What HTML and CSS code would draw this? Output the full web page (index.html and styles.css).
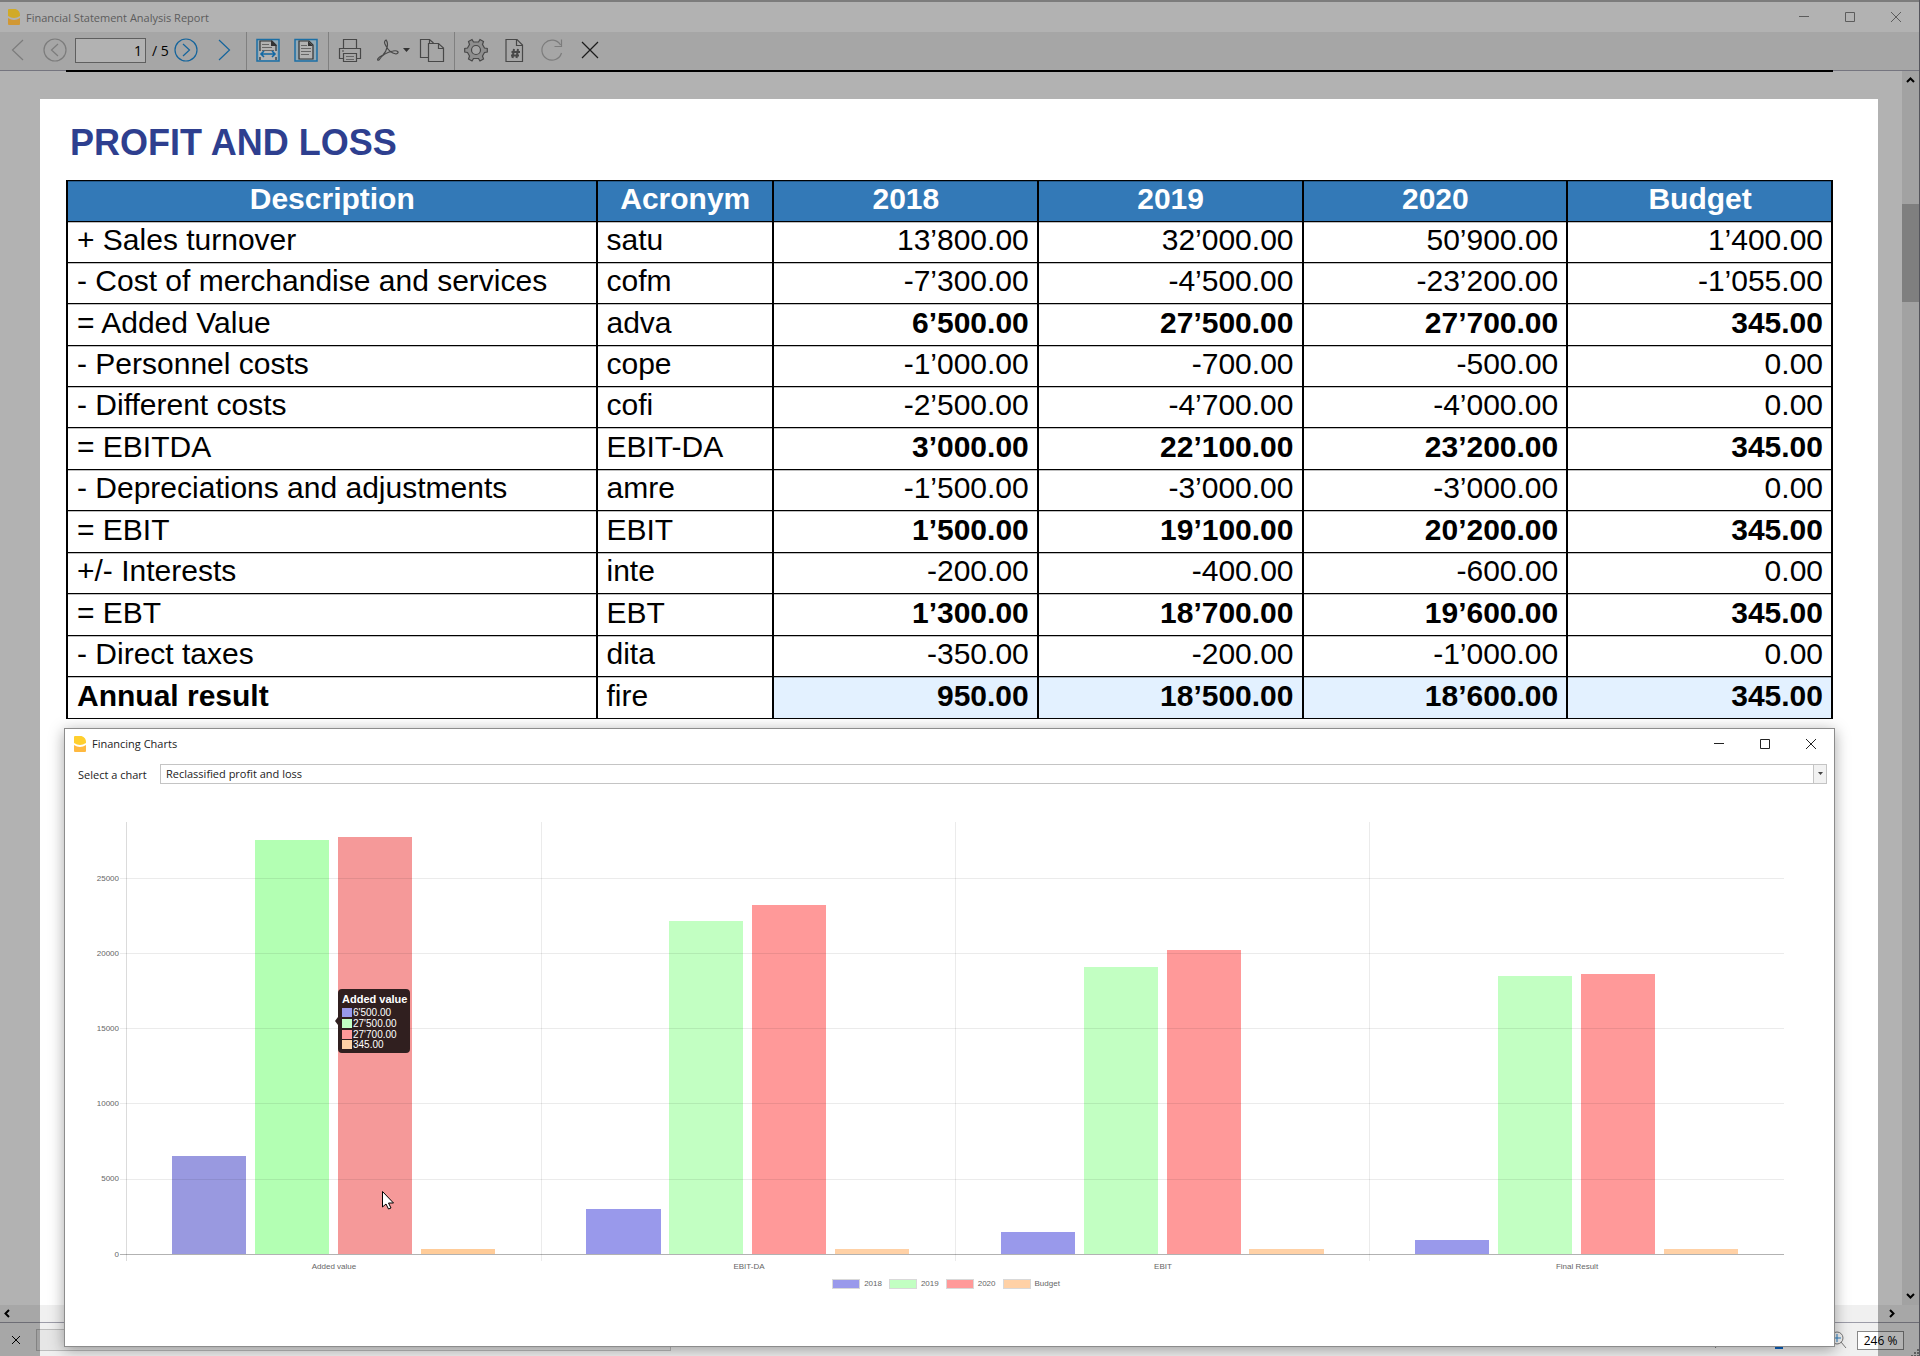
FILE: index.html
```html
<!DOCTYPE html>
<html lang="en">
<head>
<meta charset="utf-8">
<title>Financial Statement Analysis Report</title>
<link rel="stylesheet" href="styles.css">
</head>
<body>
<svg class="defs" width="0" height="0" aria-hidden="true">
  <defs>
    <symbol id="brand" viewBox="0 0 12 16">
      <path class="brand-top" d="M1 0H7.500Q12 1.500 12 6V7Q6 11 0 7V1Q0 0 1 0Z"/>
      <path class="brand-bottom" d="M0 9Q6 13 12 9V15Q12 16 11 16H1Q0 16 0 15Z"/>
    </symbol>
    <symbol id="minimize" viewBox="0 0 12 12"><path d="M1 5.500H11"/></symbol>
    <symbol id="maximize" viewBox="0 0 12 12"><path d="M1.500 1.500H10.500V10.500H1.500Z"/></symbol>
    <symbol id="close" viewBox="0 0 12 12"><path d="M1 1L11 11M11 1L1 11"/></symbol>
  </defs>
</svg>
<div class="app">
  <header class="titlebar">
    <svg class="brand brand-dim" width="12" height="16"><use href="#brand"/></svg>
    <span class="window-title">Financial Statement Analysis Report</span>
    <div class="window-controls">
      <button aria-label="Minimize"><svg width="12" height="12"><use href="#minimize"/></svg></button>
      <button aria-label="Maximize"><svg width="12" height="12"><use href="#maximize"/></svg></button>
      <button aria-label="Close"><svg width="12" height="12"><use href="#close"/></svg></button>
    </div>
  </header>

  <nav class="toolbar" aria-label="Report tools">
    <div class="tool-group pager">
      <button aria-label="First page" class="muted"><svg viewBox="0 0 24 24"><path d="M18 2L7.500 12L18 22"/></svg></button>
      <button aria-label="Previous page" class="muted"><svg viewBox="0 0 24 24"><circle cx="12" cy="12" r="11"/><path d="M15 6L8.500 12L15 18"/></svg></button>
      <label class="page-number"><input type="text" value="1" aria-label="Page"><span>/ 5</span></label>
      <button aria-label="Next page" class="blue"><svg viewBox="0 0 24 24"><circle cx="12" cy="12" r="11"/><path d="M9 6L15.500 12L9 18"/></svg></button>
      <button aria-label="Last page" class="blue"><svg viewBox="0 0 24 24"><path d="M7 2L17.500 12L7 22"/></svg></button>
    </div>
    <div class="tool-group">
      <button aria-label="Fit width"><svg viewBox="0 0 24 24"><path class="tile" d="M1 1.500H23V23H1Z"/><path class="paper" d="M4 22V3H16L20 7V22"/><path class="solid" d="M15 2V8H21Z"/><path class="thin" d="M6 6.500H13M6 9.500H16M6 12.500H18"/><path class="paper-fill" d="M3 13H21V19H3Z"/><path class="arrow" d="M5 16H19M8 13L5 16L8 19M16 13L19 16L16 19"/></svg></button>
      <button aria-label="Fit page"><svg viewBox="0 0 24 24"><path class="tile" d="M1 1.500H23V23H1Z"/><path class="paper" d="M5 3H15L19 7V21H5Z"/><path class="solid" d="M14 3V8H19Z"/><path class="thin" d="M7 7.500H13M7 10.500H17M7 13.500H17M7 16.500H15"/></svg></button>
    </div>
    <div class="tool-group">
      <button aria-label="Print"><svg viewBox="0 0 24 24"><path d="M5.500 10.500V1.500H18.500V10.500M5.500 20.500H1.500V10.500H22.500V20.500H18.500M5.500 15.500H18.500V23.500H5.500Z"/><path class="thin" d="M8 18.500H16M8 21.500H16"/><path d="M4 13H6"/></svg></button>
      <button aria-label="Export to PDF" class="pdf"><svg viewBox="0 0 34 24"><path d="M10 2C8 3 8 5 10 8C12 12 15 15 20 16C24 15 22 12 17 13C11 14 6 17 3 22C0 23 2 19 7 17C11 13 13 5 10 2Z"/><path class="solid" d="M27 10H34L30.500 14Z"/></svg></button>
      <button aria-label="Copy"><svg viewBox="0 0 24 24"><path d="M8.500 19.500H.500V1.500H9.500L13.500 5"/><path d="M9.500 1.500V5.500"/><path class="paper-fill line" d="M8.500 5.500H18.500L23.500 10V23.500H8.500Z"/><path d="M18.500 5.500V10.500H23"/></svg></button>
    </div>
    <div class="tool-group last">
      <button aria-label="Settings"><svg viewBox="0 0 24 24"><path class="gear" d="M9.500 4L8 1.500L4.500 3.500L5.500 6.500L3.500 10L.700 10.500V14L3.500 14.500L5.500 18L4.500 21L8 23L9.500 20.500H14.500L16 23L19.500 21L18.500 18L20.500 14.500L23.300 14V10.500L20.500 10L18.500 6.500L19.500 3.500L16 1.500L14.500 4Z"/><circle class="gear-hole" cx="12" cy="12" r="4.500"/></svg></button>
      <button aria-label="Page setup"><svg viewBox="0 0 24 24"><path d="M4 1.500H15L20.500 7V23.500H4Z"/><path d="M14.500 1.500V7.500H20"/><path class="hash" d="M12 11L10.500 20M16 11L14.500 20M9.500 14H18M9 17.500H17"/></svg></button>
      <button aria-label="Refresh" class="muted"><svg viewBox="0 0 24 24"><path d="M21.500 15A10 10 0 1 1 20.500 7M21.500 1.500V8.500H14.500"/></svg></button>
      <button aria-label="Close preview" class="dark"><svg viewBox="0 0 24 24"><path d="M4 4L20 20M20 4L4 20"/></svg></button>
    </div>
  </nav>

  <main class="viewport">
    <div class="pages">
      <div class="previous-page"></div>
      <section class="page">
        <h1>PROFIT AND LOSS</h1>
        <table class="statement">
          <colgroup><col class="c-desc"><col class="c-acr"><col class="c-num"><col class="c-num"><col class="c-num"><col class="c-num"></colgroup>
          <thead><tr><th>Description</th><th>Acronym</th><th>2018</th><th>2019</th><th>2020</th><th>Budget</th></tr></thead>
          <tbody>
            <tr><td>+ Sales turnover</td><td>satu</td><td>13’800.00</td><td>32’000.00</td><td>50’900.00</td><td>1’400.00</td></tr>
            <tr><td>- Cost of merchandise and services</td><td>cofm</td><td>-7’300.00</td><td>-4’500.00</td><td>-23’200.00</td><td>-1’055.00</td></tr>
            <tr class="sum"><td>= Added Value</td><td>adva</td><td>6’500.00</td><td>27’500.00</td><td>27’700.00</td><td>345.00</td></tr>
            <tr><td>- Personnel costs</td><td>cope</td><td>-1’000.00</td><td>-700.00</td><td>-500.00</td><td>0.00</td></tr>
            <tr><td>- Different costs</td><td>cofi</td><td>-2’500.00</td><td>-4’700.00</td><td>-4’000.00</td><td>0.00</td></tr>
            <tr class="sum"><td>= EBITDA</td><td>EBIT-DA</td><td>3’000.00</td><td>22’100.00</td><td>23’200.00</td><td>345.00</td></tr>
            <tr><td>- Depreciations and adjustments</td><td>amre</td><td>-1’500.00</td><td>-3’000.00</td><td>-3’000.00</td><td>0.00</td></tr>
            <tr class="sum"><td>= EBIT</td><td>EBIT</td><td>1’500.00</td><td>19’100.00</td><td>20’200.00</td><td>345.00</td></tr>
            <tr><td>+/- Interests</td><td>inte</td><td>-200.00</td><td>-400.00</td><td>-600.00</td><td>0.00</td></tr>
            <tr class="sum"><td>= EBT</td><td>EBT</td><td>1’300.00</td><td>18’700.00</td><td>19’600.00</td><td>345.00</td></tr>
            <tr><td>- Direct taxes</td><td>dita</td><td>-350.00</td><td>-200.00</td><td>-1’000.00</td><td>0.00</td></tr>
            <tr class="sum result"><td>Annual result</td><td>fire</td><td>950.00</td><td>18’500.00</td><td>18’600.00</td><td>345.00</td></tr>
          </tbody>
        </table>

        <section class="chart-window" aria-label="Financing Charts">
          <header class="chart-titlebar">
            <svg class="brand" width="12" height="16"><use href="#brand"/></svg>
            <span class="window-title">Financing Charts</span>
            <div class="window-controls">
              <button aria-label="Minimize"><svg width="12" height="12"><use href="#minimize"/></svg></button>
              <button aria-label="Maximize"><svg width="12" height="12"><use href="#maximize"/></svg></button>
              <button aria-label="Close"><svg width="12" height="12"><use href="#close"/></svg></button>
            </div>
          </header>
          <div class="chooser">
            <label for="chart-select">Select a chart</label>
            <div class="select-box">
              <select id="chart-select"><option>Reclassified profit and loss</option></select>
              <span class="select-arrow"><svg width="5" height="4" viewBox="0 0 5 4"><path d="M0 0H5L2.500 3Z"/></svg></span>
            </div>
          </div>
          <svg class="chart" viewBox="0 0 1769 475" role="img" aria-label="Reclassified profit and loss">
            <g class="active">
              <rect class="y18" x="107" y="356" width="74" height="98"/>
              <rect class="y19" x="190" y="40" width="74" height="414"/>
              <rect class="y20" x="273" y="37" width="74" height="417"/>
              <rect class="bud" x="356" y="449" width="74" height="5"/>
            </g>
            <g>
              <rect class="y18" x="521" y="409" width="75" height="45"/>
              <rect class="y19" x="604" y="121" width="74" height="333"/>
              <rect class="y20" x="687" y="105" width="74" height="349"/>
              <rect class="bud" x="770" y="449" width="74" height="5"/>
              <rect class="y18" x="936" y="432" width="74" height="22"/>
              <rect class="y19" x="1019" y="167" width="74" height="287"/>
              <rect class="y20" x="1102" y="150" width="74" height="304"/>
              <rect class="bud" x="1184" y="449" width="75" height="5"/>
              <rect class="y18" x="1350" y="440" width="74" height="14"/>
              <rect class="y19" x="1433" y="176" width="74" height="278"/>
              <rect class="y20" x="1516" y="174" width="74" height="280"/>
              <rect class="bud" x="1599" y="449" width="74" height="5"/>
            </g>
            <g class="grid">
              <rect x="55" y="78" width="1664" height="1"/>
              <rect x="55" y="153" width="1664" height="1"/>
              <rect x="55" y="228" width="1664" height="1"/>
              <rect x="55" y="303" width="1664" height="1"/>
              <rect x="55" y="379" width="1664" height="1"/>
              <rect x="476" y="22" width="1" height="439"/>
              <rect x="890" y="22" width="1" height="439"/>
              <rect x="1304" y="22" width="1" height="439"/>
              <rect class="y-axis" x="61" y="22" width="1" height="439"/>
              <rect class="x-axis" x="55" y="454" width="1664" height="1"/>
            </g>
            <g class="ticks">
              <text x="54" y="81">25000</text>
              <text x="54" y="156">20000</text>
              <text x="54" y="231">15000</text>
              <text x="54" y="306">10000</text>
              <text x="54" y="381">5000</text>
              <text x="54" y="457">0</text>
            </g>
            <g class="categories">
              <text x="269" y="469">Added value</text>
              <text x="684" y="469">EBIT-DA</text>
              <text x="1098" y="469">EBIT</text>
              <text x="1512" y="469">Final Result</text>
            </g>
            <g class="tooltip">
              <path class="bubble" d="M277 189H341Q345 189 345 193V249Q345 253 341 253H277Q273 253 273 249V225L270 221L273 217V193Q273 189 277 189Z"/>
              <text class="heading" x="277" y="203">Added value</text>
              <rect class="y18" x="277" y="208" width="10" height="9"/>
              <rect class="y19" x="277" y="219" width="10" height="9"/>
              <rect class="y20" x="277" y="230" width="10" height="9"/>
              <rect class="bud" x="277" y="240" width="10" height="9"/>
              <text x="288" y="216">6'500.00</text>
              <text x="288" y="227">27'500.00</text>
              <text x="288" y="238">27'700.00</text>
              <text x="288" y="248">345.00</text>
            </g>
            <path class="cursor" d="M317.500 391.500V407L321 404L323.500 409L326 408L323.500 403H328.500Z"/>
          </svg>
          <ul class="legend">
            <li><i class="k18"></i>2018</li>
            <li><i class="k19"></i>2019</li>
            <li><i class="k20"></i>2020</li>
            <li><i class="kbud"></i>Budget</li>
          </ul>
        </section>
      </section>
    </div>
    <div class="vscroll">
      <svg width="9" height="6" viewBox="0 0 9 6"><path d="M1 5L4.500 1.500L8 5"/></svg>
      <div class="thumb"></div>
      <svg class="down" width="9" height="6" viewBox="0 0 9 6"><path d="M1 1L4.500 4.500L8 1"/></svg>
    </div>
  </main>

  <footer class="bottom">
    <div class="hscroll">
      <svg width="6" height="9" viewBox="0 0 6 9"><path d="M5 1L1.500 4.500L5 8"/></svg>
      <svg width="6" height="9" viewBox="0 0 6 9"><path d="M1 1L4.500 4.500L1 8"/></svg>
    </div>
    <div class="status">
      <button aria-label="Close search" class="status-close"><svg width="10" height="10" viewBox="0 0 10 10"><path d="M1 1L9 9M9 1L1 9"/></svg></button>
      <input class="search" type="text" aria-label="Search">
      <div class="zoom">
        <svg class="glass" width="16" height="18" viewBox="0 0 16 18"><circle cx="6" cy="7" r="6"/><path d="M10 11L15 17"/></svg>
        <input type="range" min="10" max="500" value="282" aria-label="Zoom">
        <svg class="glass" width="16" height="18" viewBox="0 0 16 18"><circle cx="6" cy="7" r="6"/><path d="M10 11L15 17"/><path class="plus" d="M2 7H10M6 3V11"/></svg>
        <output>246 %</output>
      </div>
      <svg class="grip" width="8" height="8" viewBox="0 0 8 8"><path d="M6 0h2v2h-2zM3 3h2v2h-2zM6 3h2v2h-2zM0 6h2v2h-2zM3 6h2v2h-2zM6 6h2v2h-2z"/></svg>
    </div>
  </footer>
</div>
</body>
</html>
```
FILE: styles.css
```css
* { box-sizing: border-box; }

body {
  margin: 0;
  background: #b2b2b2;
  color: #000;
  font-family: "Open Sans", "Noto Sans", sans-serif;
  font-size: 11px;
}

button {
  padding: 0;
  border: 0;
  background: none;
  color: inherit;
  font: inherit;
}

svg { display: block; }
.defs { position: absolute; }

.app {
  display: flex;
  flex-direction: column;
  min-height: 100vh;
  border-right: 1px solid #55555c;
}

/* Window title bars */
.titlebar {
  display: flex;
  align-items: center;
  height: 32px;
  padding-left: 8px;
  border-top: 2px solid #7c7c7c;
  background: #b2b2b2;
  color: #5c5c5c;
}

.brand { margin-right: 6px; }
.brand-top { fill: #ffcf2e; }
.brand-bottom { fill: #ffb940; }
.brand-dim { filter: brightness(0.82); }

.window-controls {
  display: flex;
  gap: 34px;
  margin-left: auto;
  padding-right: 17px;
}

.window-controls svg {
  fill: none;
  stroke: currentColor;
  stroke-width: 1;
}

/* Toolbar */
.toolbar {
  display: flex;
  height: 38px;
  background: #a6a6a6;
}

.tool-group {
  display: flex;
  align-items: center;
  gap: 14px;
  padding: 0 10px 2px 9px;
  border-right: 1px solid #808080;
}

.tool-group.pager { padding-left: 5px; }
.tool-group.last { border-right: 0; }

.toolbar button { width: 24px; height: 24px; color: #484848; }
.toolbar button.pdf { width: 30px; }
.toolbar button.muted { color: #7c7c7c; }
.toolbar button.blue { color: #14649c; }
.toolbar button.dark { color: #1c1c1c; }

.toolbar svg {
  height: 24px;
  overflow: visible;
  fill: none;
  stroke: currentColor;
  stroke-width: 1.2;
}

.toolbar .tile { fill: #93a9b5; stroke: #1c6fa5; stroke-width: 1.5; }
.toolbar .paper { fill: #b2b2b2; stroke: #333; }
.toolbar .paper-fill { fill: #b2b2b2; stroke: none; }
.toolbar .paper-fill.line { fill: #a6a6a6; stroke: currentColor; }
.toolbar .solid { fill: #333; stroke: none; }
.toolbar .thin { stroke: #666; stroke-width: 1; }
.toolbar .arrow { stroke: #1268a3; stroke-width: 1.6; }
.toolbar .gear { fill: #8e8e8e; }
.toolbar .gear-hole { fill: #a6a6a6; }
.toolbar .hash { stroke-width: 2; }

.page-number {
  display: flex;
  align-items: center;
  gap: 6px;
  width: 91px;
  margin: 0 -6px 0 -6px;
  font-size: 14px;
}

.page-number input {
  width: 71px;
  height: 25px;
  padding: 0 3px;
  border: 1px solid #5f5f5f;
  background: #b2b2b2;
  color: #000;
  font: inherit;
  text-align: right;
}

.page-number span { white-space: nowrap; }

/* Scrolling report area */
.viewport {
  display: flex;
  flex: 1;
  border-top: 1px solid #75757f;
}

.pages {
  display: flex;
  flex: 1;
  flex-direction: column;
  padding: 0 24px 0 40px;
}

.previous-page {
  height: 29px;
  margin: -1px 45px 0 26px;
  border-top: 2px solid #000;
}

.page {
  flex: 1;
  padding: 23px 43px 0 24px;
  background: #fff;
}

.page h1 {
  margin: 0 0 16px 6px;
  color: #2e3f8f;
  font: bold 36px/42px "Liberation Sans", Arial, sans-serif;
}

.statement {
  width: calc(100% - 4px);
  margin-left: 2px;
  border-collapse: collapse;
  table-layout: fixed;
  font: 30px/36px "Liberation Sans", Arial, sans-serif;
}

.c-desc { width: 30%; }
.c-acr { width: 10%; }
.c-num { width: 15%; }

.statement tr { height: 41px; }
.statement tr.sum { height: 42px; }

.statement th,
.statement td {
  padding: 0 8px 4px 9px;
  border: 1px solid #000;
  border-width: 1px 2px;
  box-shadow: inset 0 1px 0 rgba(0, 0, 0, 0.25);
  text-align: left;
  white-space: nowrap;
}

.statement th { background: #3379b7; color: #fff; text-align: center; }
.statement td:nth-child(n+3) { text-align: right; }
.sum td:nth-child(n+3),
.result td:first-child { font-weight: bold; }
.result td:nth-child(n+3) { background: #e3f1ff; }

/* Floating chart window, hanging over the status area */
.chart-window {
  position: relative;
  z-index: 2;
  margin: 9px 0 -42px;
  padding-bottom: 57px;
  border: 1px solid #8c8c8c;
  background: #fff;
  box-shadow: 0 3px 14px rgba(0, 0, 0, 0.35);
}

.chart-titlebar {
  display: flex;
  align-items: center;
  height: 29px;
  padding-left: 9px;
  color: #222;
}

.chooser {
  display: flex;
  align-items: center;
  gap: 12px;
  height: 20px;
  margin: 6px 7px 16px 13px;
  color: #222;
}

.chooser label { width: 70px; white-space: nowrap; }

.select-box {
  display: flex;
  flex: 1;
  height: 20px;
  border: 1px solid #c4c4c4;
}

.select-box select {
  flex: 1;
  padding: 0 5px 2px;
  border: 0;
  appearance: none;
  background: #fff;
  color: #222;
  font: inherit;
}

.select-arrow {
  display: grid;
  place-items: center;
  width: 13px;
  border-left: 1px solid #c4c4c4;
  background: #f2f2f2;
  fill: #444;
}

/* Bar chart */
.chart {
  width: 100%;
  font-family: "Liberation Sans", Arial, sans-serif;
  font-size: 8px;
}

.chart .y18 { fill: #9999eb; }
.chart .y19 { fill: #c2ffc2; }
.chart .y20 { fill: #ff9999; }
.chart .bud { fill: #ffd1a6; }
.chart .active .y18 { fill: #9999e0; }
.chart .active .y19 { fill: #b3ffb3; }
.chart .active .y20 { fill: #f59999; }
.chart .active .bud { fill: #ffcc99; }

.grid { fill: rgba(0, 0, 0, 0.08); }
.grid .y-axis { fill: rgba(0, 0, 0, 0.14); }
.grid .x-axis { fill: rgba(0, 0, 0, 0.3); }
.ticks { fill: #666; text-anchor: end; }
.categories { fill: #666; text-anchor: middle; }

.tooltip { fill: #fff; font-size: 10px; }
.tooltip .bubble { fill: #301f1f; }
.tooltip .heading { font-size: 11px; font-weight: bold; }
.cursor { fill: #fff; stroke: #000; stroke-width: 1; }

.legend {
  display: flex;
  justify-content: center;
  gap: 7px;
  margin: 4px 7px 0 0;
  padding: 0;
  color: #666;
  font: 8px/10px "Liberation Sans", Arial, sans-serif;
  list-style: none;
}

.legend li { display: flex; align-items: center; gap: 4px; }
.legend i { width: 28px; height: 10px; border: 1px solid #d9d9d9; }
.k18 { background: #9999eb; }
.k19 { background: #c2ffc2; }
.k20 { background: #ff9999; }
.kbud { background: #ffd1a6; }

/* Scroll bars */
.vscroll {
  display: flex;
  flex-direction: column;
  align-items: center;
  width: 17px;
  padding: 6px 0;
  background: #a2a2a2;
}

.vscroll svg,
.hscroll svg { fill: none; stroke: #000; stroke-width: 2; }
.vscroll .thumb { width: 17px; height: 98px; margin-top: 121px; background: #7f7f7f; }
.vscroll .down { margin-top: auto; }

.bottom { position: relative; background: #f0f0f0; }

/* The shade dims only what lies outside the report page */
.bottom::before,
.bottom::after {
  position: absolute;
  top: 0;
  bottom: 0;
  background: rgba(0, 0, 0, 0.3);
  content: "";
  pointer-events: none;
}

.bottom::before { left: 0; width: 40px; }
.bottom::after { right: 0; width: 41px; }

.hscroll {
  display: flex;
  align-items: center;
  justify-content: space-between;
  height: 17px;
  padding: 0 24px 0 4px;
}

.status {
  display: flex;
  align-items: center;
  height: 35px;
  border-top: 1px solid #9c9ca8;
}

.status-close { margin: 0 15px 0 11px; }
.status-close svg { stroke: #000; stroke-width: 1; }

.search {
  width: 635px;
  height: 22px;
  border: 1px solid #bcbcbc;
  background: #e6e6e6;
}

.zoom {
  display: flex;
  align-items: center;
  gap: 10px;
  margin-left: auto;
}

.glass { fill: none; stroke: #777; }
.glass .plus { stroke: #2a7fc0; }

.zoom input {
  width: 94px;
  height: 18px;
  margin: 0;
  appearance: none;
  background: linear-gradient(#b5b5b5, #b5b5b5) center / 100% 2px no-repeat;
}

.zoom input::-webkit-slider-thumb {
  appearance: none;
  width: 8px;
  height: 17px;
  background: #0a63c2;
}

.zoom output {
  width: 47px;
  height: 19px;
  border: 1px solid #888;
  background: #fff;
  font-size: 12px;
  line-height: 18px;
  text-align: center;
}

.grip { align-self: flex-end; margin-left: 7px; fill: #888; }
```
